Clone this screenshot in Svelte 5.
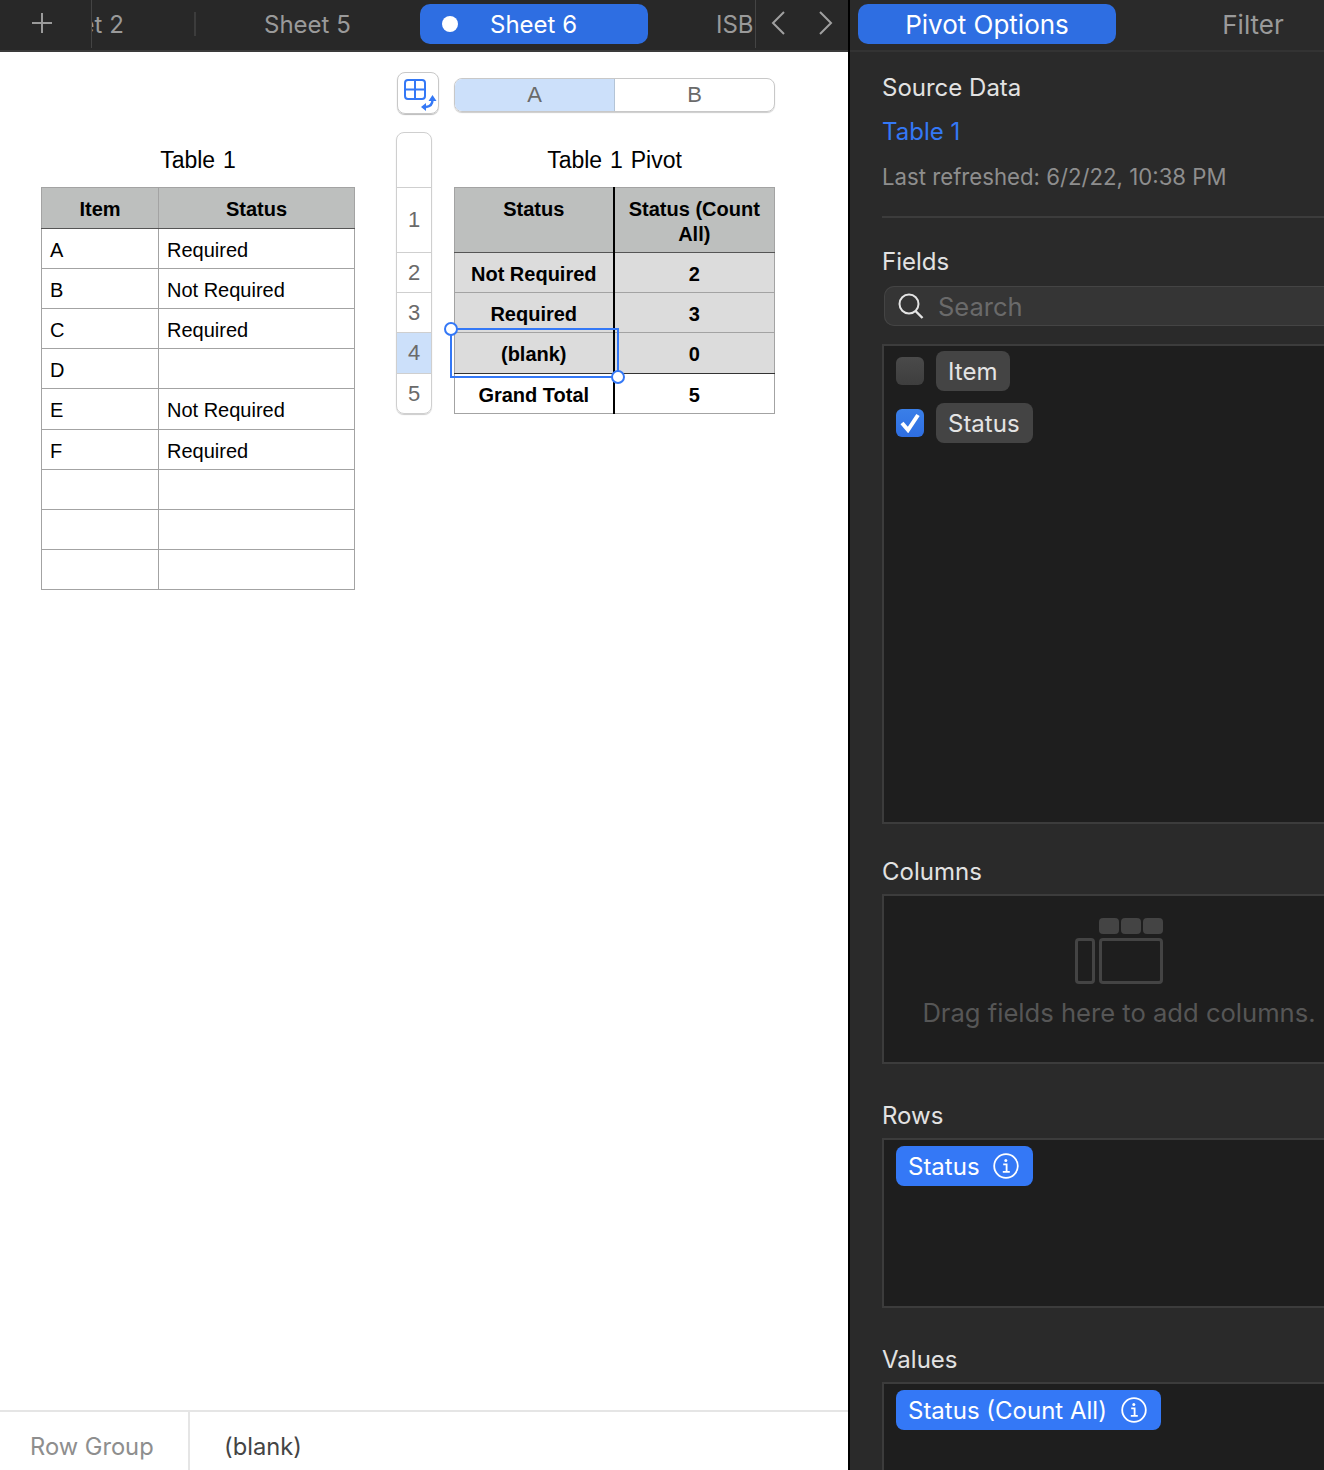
<script>
  const sheets = [
    { name: 'Sheet 2' },
    { name: 'Sheet 5' },
    { name: 'Sheet 6', active: true },
    { name: 'ISBN' }
  ];
  const sourceRows = [
    ['A', 'Required'], ['B', 'Not Required'], ['C', 'Required'], ['D', ''], ['E', 'Not Required'],
    ['F', 'Required'], ['', ''], ['', ''], ['', '']
  ];
  const pivotRows = [
    ['Not Required', '2'], ['Required', '3'], ['(blank)', '0']
  ];
  const rowHeads = ['1', '2', '3', '4', '5'];
</script>

{#snippet info()}
  <svg class="info" width="26" height="26" viewBox="0 0 26 26" fill="none" stroke="#fff">
    <circle cx="13" cy="13" r="11.8" stroke-width="1.8" />
    <circle cx="12.8" cy="7.6" r="1.5" fill="#fff" stroke="none" />
    <path d="M10.2 11.4h3.4v7.2M9.8 18.8h7" stroke-width="1.8" />
  </svg>
{/snippet}

<div class="app">
  <div class="main">
    <div class="tabbar">
      <div class="plus">
        <svg width="20" height="20" viewBox="0 0 20 20" stroke="#9a9a9a" stroke-width="2"><path d="M10 0v20M0 10h20" /></svg>
      </div>
      <div class="scroller">
        <div class="tabs">
          {#each sheets as sheet, i}
            <div class="tab" class:active={sheet.active} class:sep={i === 1}>
              {#if sheet.active}<span class="dot"></span>{/if}
              {sheet.name}
            </div>
          {/each}
        </div>
      </div>
      <div class="arrows">
        <svg width="14" height="24" viewBox="0 0 14 24" fill="none" stroke="#a0a0a0" stroke-width="2"><path d="M13 1 2 12l11 11" /></svg>
        <svg width="14" height="24" viewBox="0 0 14 24" fill="none" stroke="#a0a0a0" stroke-width="2"><path d="m1 1 11 11L1 23" /></svg>
      </div>
    </div>

    <div class="canvas">
      <div class="source">
        <div class="title">Table 1</div>
        <table class="t-source">
          <thead><tr><th>Item</th><th>Status</th></tr></thead>
          <tbody>
            {#each sourceRows as row}
              <tr><td>{row[0]}</td><td>{row[1]}</td></tr>
            {/each}
          </tbody>
        </table>
      </div>

      <div class="pivot">
        <div class="pivot-top">
          <div class="grid-btn">
            <svg width="36" height="36" viewBox="0 0 36 36" fill="none" stroke="#3478f6">
              <rect x="1" y="1" width="20" height="19" rx="3" stroke-width="2" />
              <path d="M11 1v19M1 10.5h20" stroke-width="2" />
              <path d="M28.5 21c0 4-2.500 6.500-6.500 7" stroke-width="2.4" />
              <path d="m28.500 16 4 6h-8zM17 28l5-4v8z" fill="#3478f6" stroke="none" />
            </svg>
          </div>
          <div class="col-heads">
            <div class="col-head sel">A</div>
            <div class="col-head">B</div>
          </div>
        </div>

        <div class="pivot-body">
          <div class="row-heads">
            <div class="row-head blank"></div>
            {#each rowHeads as r}
              <div class="row-head" class:sel={r === '4'}>{r}</div>
            {/each}
          </div>
          <div class="pivot-table">
            <div class="title">Table 1 Pivot</div>
            <table class="t-pivot">
              <thead><tr><th>Status</th><th>Status (Count All)</th></tr></thead>
              <tbody>
                {#each pivotRows as row}
                  <tr><td>{row[0]}</td><td>{row[1]}</td></tr>
                {/each}
                <tr class="total"><td>Grand Total</td><td>5</td></tr>
              </tbody>
            </table>
            <div class="selection">
              <span class="handle tl"></span>
              <span class="handle br"></span>
            </div>
          </div>
        </div>
      </div>
    </div>

    <div class="formula">
      <div class="f-label">Row Group</div>
      <div class="f-value">(blank)</div>
    </div>
  </div>

  <aside class="side">
    <div class="side-tabs">
      <div class="side-tab active">Pivot Options</div>
      <div class="side-tab">Filter</div>
    </div>

    <div class="side-body">
      <div class="source-info">
        <div class="label">Source Data</div>
        <div class="link">Table 1</div>
        <div class="refreshed">Last refreshed: 6/2/22, 10:38 PM</div>
      </div>

      <div class="label fields-label">Fields</div>
      <div class="search">
        <svg width="26" height="26" viewBox="0 0 26 26" fill="none" stroke="#e4e4e4" stroke-width="2"><circle cx="11" cy="11" r="9.5" /><path d="m17.5 18 7 7" stroke-width="2.4" /></svg>
        <span>Search</span>
      </div>
      <div class="box fields">
        <div class="field">
          <span class="check"></span>
          <span class="chip">Item</span>
        </div>
        <div class="field">
          <span class="check on">
            <svg width="22" height="20" viewBox="0 0 22 20" fill="none" stroke="#fff" stroke-width="4"><path d="m3 10 6 7 10-15" /></svg>
          </span>
          <span class="chip">Status</span>
        </div>
      </div>

      <div class="label">Columns</div>
      <div class="box columns">
        <div class="placeholder">
          <div class="ph-top"><i></i><i></i><i></i></div>
          <div class="ph-bottom"><i></i><i></i></div>
        </div>
        <div class="ph-text">Drag fields here to add columns.</div>
      </div>

      <div class="label">Rows</div>
      <div class="box rows">
        <span class="chip blue">Status {@render info()}</span>
      </div>

      <div class="label">Values</div>
      <div class="box values">
        <span class="chip blue">Status (Count All) {@render info()}</span>
      </div>
    </div>
  </aside>
</div>

<style>
  :global(body) { margin: 0; background: #fff; }
  .app { display: flex; width: 1324px; height: 1470px; overflow: hidden; font-family: Inter, "Liberation Sans", sans-serif; font-size: 24px; }

  .main { width: 848px; flex: none; display: flex; flex-direction: column; background: #fff; }
  .tabbar { height: 50px; flex: none; display: flex; background: #282828; border-bottom: 2px solid #3a3a3a; color: #9a9a9a; }
  .plus { width: 91px; flex: none; display: flex; align-items: center; justify-content: center; padding-right: 7px; padding-bottom: 4px; box-sizing: border-box; }
  .scroller { width: 663px; flex: none; overflow: hidden; border-left: 1px solid #444; border-right: 1px solid #444; height: 48px; }
  .tabs { display: flex; margin-left: -126px; height: 48px; align-items: flex-start; padding-top: 4px; box-sizing: border-box; }
  .tab { width: 228px; flex: none; height: 40px; padding-left: 70px; box-sizing: border-box; display: flex; align-items: center; white-space: nowrap; position: relative; }
  .tab:first-child { padding-left: 71px; }
  .tab:last-child { padding-left: 68px; }
  .tab.sep { width: 226px; border-left: 2px solid #3c3c3c; height: 24px; margin-top: 8px; padding-left: 68px; }
  .dot { position: absolute; left: 22px; top: 12px; width: 16px; height: 16px; border-radius: 50%; background: #fff; }
  .tab.active { background: #2e6ee2; color: #fff; border-radius: 10px; }
  .arrows { flex: 1; display: flex; align-items: center; justify-content: space-between; padding: 0 15px 4px 15px; }

  .canvas { flex: 1; display: flex; align-items: flex-start; }
  .title { height: 55px; box-sizing: border-box; padding-top: 2px; display: flex; align-items: center; justify-content: center; font-family: "Liberation Sans", sans-serif; font-size: 23px; word-spacing: 1.5px; color: #000; }
  .source { margin-left: 41px; margin-top: 80px; width: 314px; flex: none; }
  table { border-collapse: collapse; table-layout: fixed; font-family: "Liberation Sans", sans-serif; font-size: 20px; color: #000; }
  th, td { border: 1px solid #a3a3a3; padding: 0; box-sizing: border-box; }
  th { background: #bdbfbe; font-weight: 700; }

  .t-source { width: 314px; }
  .t-source th { height: 41px; padding-top: 2px; border-bottom-color: #555; }
  .t-source th:first-child { width: 117px; }
  .t-source td { height: 40px; padding-left: 8px; padding-top: 4px; }
  .t-source tr:nth-child(5) td { height: 41px; padding-top: 3px; }

  .pivot { margin-left: 42px; margin-top: 20px; flex: none; }
  .pivot-top { display: flex; gap: 15px; }
  .grid-btn { width: 42px; height: 42px; box-sizing: border-box; border: 1px solid #c8c8c8; border-radius: 8px; box-shadow: 0 1px 1px #bbb; padding: 6px 0 0 6px; }
  .col-heads { width: 321px; height: 34px; margin-top: 6px; display: flex; box-sizing: border-box; border: 1px solid #c8c8c8; border-radius: 8px; overflow: hidden; box-shadow: 0 1px 1px #ccc; }
  .col-head { flex: 1; display: flex; align-items: center; justify-content: center; font-family: "Liberation Sans", sans-serif; font-size: 22px; color: #6a6a6a; }
  .col-head.sel { background: #cce0fa; border-right: 1px solid #b4c4d6; }

  .pivot-body { display: flex; gap: 22px; margin-top: 18px; }
  .row-heads { width: 36px; height: 282px; margin-left: -1px; display: flex; flex-direction: column; box-sizing: border-box; border: 1px solid #cfcfcf; border-radius: 8px; overflow: hidden; box-shadow: 0 1px 1px #ccc; }
  .row-head { height: 40px; flex: none; box-sizing: border-box; border-bottom: 1px solid #cfcfcf; display: flex; align-items: center; justify-content: center; font-family: "Liberation Sans", sans-serif; font-size: 22px; color: #6a6a6a; }
  .row-head.blank { height: 55px; }
  .row-head:nth-child(2) { height: 65px; }
  .row-head:nth-child(5) { height: 41px; }
  .row-head:last-child { border-bottom: 0; }
  .row-head.sel { background: #cce0fa; }

  .pivot-table { position: relative; width: 321px; }
  .t-pivot { width: 321px; }
  .t-pivot th { height: 65px; vertical-align: top; padding: 9px 8px 0; line-height: 25px; border-bottom-color: #555; }
  .t-pivot td { height: 40px; background: #dcdcdc; text-align: center; font-weight: 700; padding-top: 3px; }
  .t-pivot tr:nth-child(3) td { height: 41px; border-bottom-color: #333; }
  .t-pivot th:first-child, .t-pivot td:first-child { width: 159px; border-right: 2px solid #000; }
  .t-pivot .total td { background: #fff; }

  .selection { position: absolute; left: -4px; top: 196px; width: 169px; height: 50px; box-sizing: border-box; border: 2px solid #3478f6; }
  .handle { position: absolute; width: 14px; height: 14px; box-sizing: border-box; border-radius: 50%; background: #fff; border: 2px solid #3478f6; }
  .handle.tl { left: -8px; top: -8px; }
  .handle.br { right: -8px; bottom: -8px; }

  .formula { height: 60px; flex: none; display: flex; box-sizing: border-box; border-top: 2px solid #e5e5e5; font-size: 23.7px; }
  .f-label { width: 190px; box-sizing: border-box; border-right: 2px solid #e5e5e5; padding: 20px 0 0 30px; color: #8e8e8e; }
  .f-value { padding: 20px 0 0 34px; color: #444; }

  .side { width: 538px; flex: none; margin-left: 0; background: #2a2a2a; color: #e2e2e2; border-left: 2px solid #000; }
  .side-tabs { height: 52px; display: flex; gap: 8px; padding: 4px 8px 0; box-sizing: border-box; border-bottom: 2px solid #333; }
  .side-tab { width: 258px; height: 40px; flex: none; display: flex; align-items: center; justify-content: center; border-radius: 10px; font-size: 26px; color: #9a9a9a; }
  .side-tab.active { background: #2e6ee2; color: #fff; }

  .side-body { padding: 0 32px; display: flex; flex-direction: column; }
  .label { height: 30px; line-height: 30px; }
  .source-info { display: flex; flex-direction: column; gap: 14px; padding: 21px 0 24px; border-bottom: 2px solid #3c3c3c; }
  .link { height: 30px; line-height: 30px; color: #3478f6; }
  .refreshed { height: 30px; line-height: 30px; margin-top: 1px; font-size: 22.2px; color: #8e8e8e; }
  .fields-label { margin-top: 29px; }

  .search { margin: 9px 0 18px 2px; height: 40px; box-sizing: border-box; display: flex; align-items: center; gap: 14px; padding-left: 14px; border-radius: 10px; background: #353535; box-shadow: inset 0 0 0 1px #444; color: #6a6a6a; font-size: 25.5px; }

  .box { background: #1e1e1e; box-sizing: border-box; border: 2px solid #3c3c3c; margin-top: 7px; }
  .fields { height: 480px; padding: 5px 12px; margin-top: 0; display: flex; flex-direction: column; gap: 12px; margin-bottom: 33px; }
  .field { display: flex; align-items: center; gap: 12px; }
  .check { width: 28px; height: 28px; box-sizing: border-box; border-radius: 6px; background: linear-gradient(#4a4a4a, #3e3e3e); display: flex; align-items: center; justify-content: center; }
  .check.on { background: linear-gradient(#3a7fe8, #2e6ee2); }
  .chip { display: inline-flex; align-items: center; gap: 13px; height: 40px; padding: 0 13px 0 12px; border-radius: 8px; background: #444; color: #e4e4e4; }
  .chip.blue { background: #3478f6; color: #fff; padding-right: 14px; }
  .values .chip.blue { gap: 14px; }

  .columns { height: 170px; margin-bottom: 37px; display: flex; flex-direction: column; align-items: center; padding-top: 22px; }
  .placeholder { width: 88px; display: flex; flex-direction: column; gap: 4px; align-items: flex-end; }
  .ph-top { display: flex; gap: 2px; }
  .ph-top i { width: 20px; height: 16px; border-radius: 4px; background: #444; }
  .ph-bottom { display: flex; gap: 4px; width: 88px; }
  .ph-bottom i { height: 46px; box-sizing: border-box; border: 3px solid #444; border-radius: 4px; width: 20px; }
  .ph-bottom i:last-child { width: 64px; }
  .ph-text { margin-top: 13px; color: #565656; white-space: nowrap; font-size: 25.6px; }

  .rows { height: 170px; margin-bottom: 37px; padding: 6px 12px; }
  .values { height: 120px; padding: 6px 12px; }
</style>
